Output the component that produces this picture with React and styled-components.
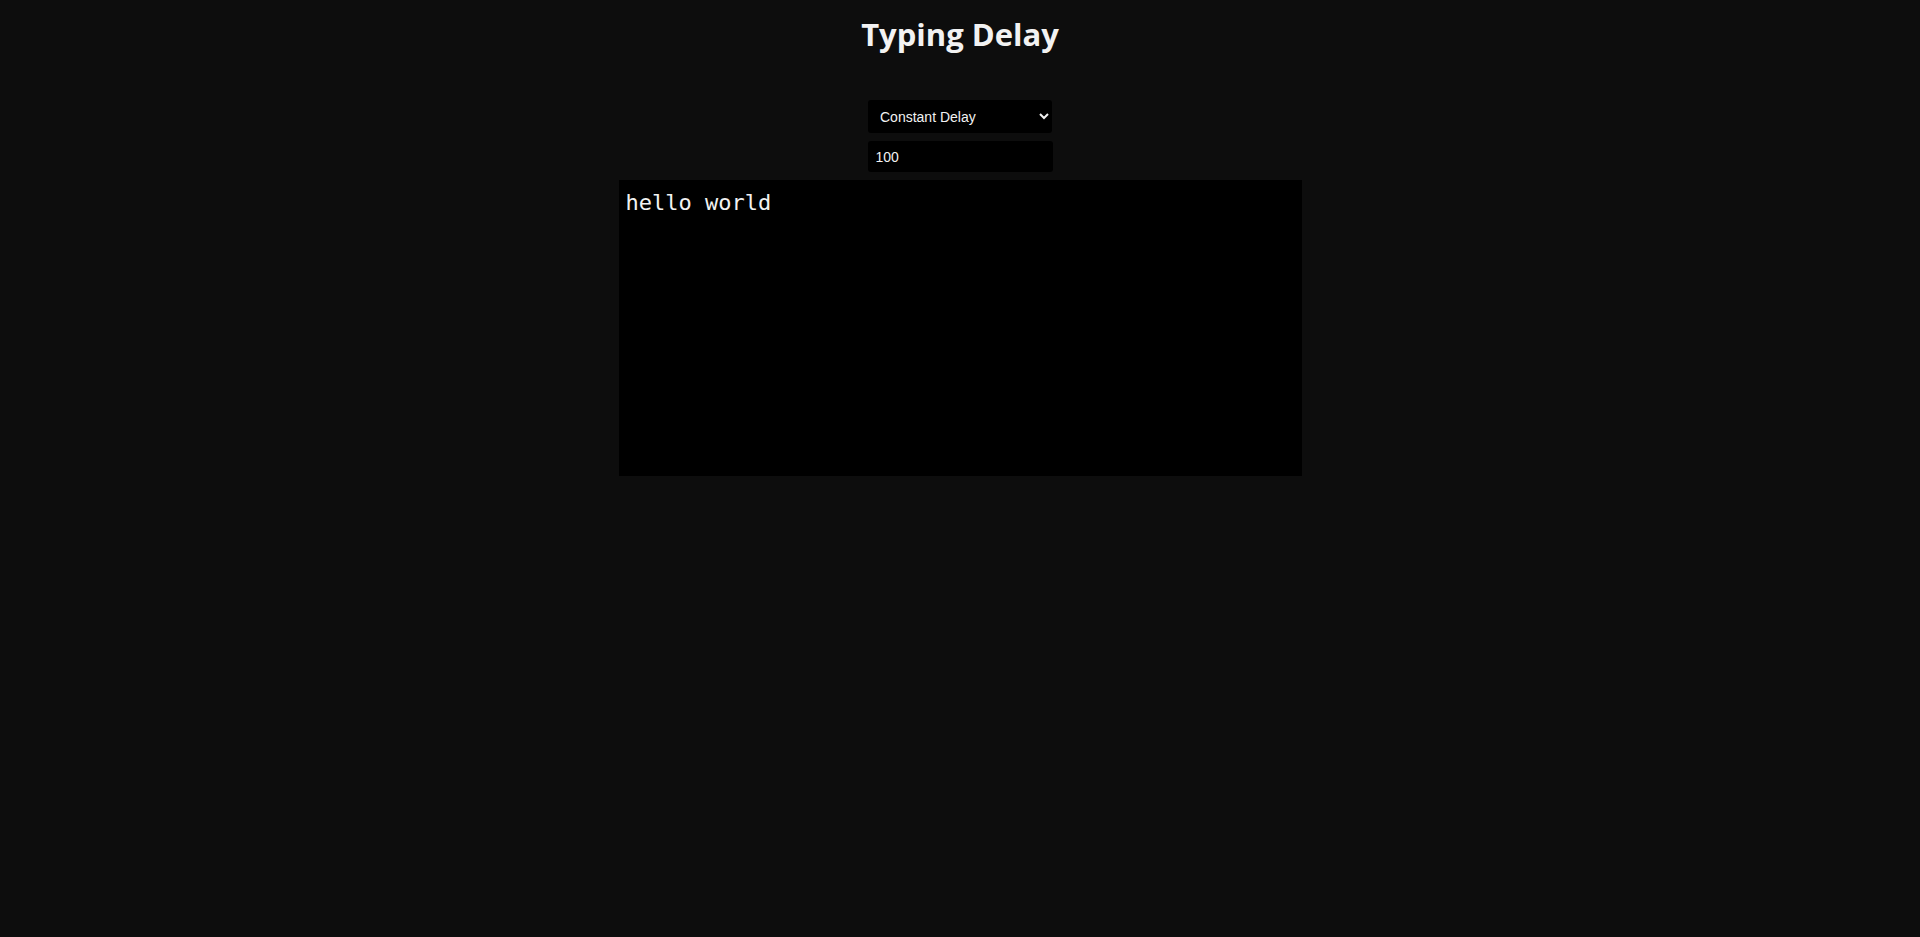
import React from "react";
import styled, { createGlobalStyle } from "styled-components";

const Global = createGlobalStyle`
  html, body { margin: 0; padding: 0; background: #0d0d0d; }
  body { font-family: "Liberation Sans", Arial, sans-serif; color: #f2f2f2; min-height: 937px; }
`;

const Page = styled.main`
  display: flex;
  flex-direction: column;
  align-items: center;
`;

const Title = styled.h1`
  margin: 12px 0 0;
  height: 44px;
  font-family: "Comic Sans MS", "Open Sans", sans-serif;
  font-weight: 700;
  font-size: 31px;
  line-height: 44px;
  color: #f2f2f2;
`;

const Controls = styled.div`
  margin-top: 44px;
  display: flex;
  flex-direction: column;
  align-items: center;
  gap: 8px;
`;

const Select = styled.select`
  width: 184px;
  height: 33px;
  background: #000;
  color: #f2f2f2;
  border: none;
  border-radius: 3px;
  padding: 0 6px 0 8px;
  font-family: "Liberation Sans", Arial, sans-serif;
  font-size: 14px;
  outline: none;
  color-scheme: dark;
`;

const NumberInput = styled.input`
  box-sizing: border-box;
  width: 185px;
  height: 31px;
  background: #000;
  color: #f2f2f2;
  border: none;
  border-radius: 3px;
  padding: 0 8px;
  font-family: "Liberation Sans", Arial, sans-serif;
  font-size: 14px;
  font-weight: 400;
  outline: none;
`;

const Editor = styled.textarea`
  box-sizing: border-box;
  width: 683px;
  height: 296px;
  background: #000;
  color: #f2f2f2;
  border: none;
  padding: 9px 7px 6px;
  font-family: "DejaVu Sans Mono", "Liberation Mono", monospace;
  font-size: 22px;
  line-height: 1.3;
  resize: none;
  outline: none;
`;

export default function App() {
  return (
    <>
      <Global />
      <Page>
        <Title>Typing Delay</Title>
        <Controls>
          <Select defaultValue="constant">
            <option value="constant">Constant Delay</option>
            <option value="random">Random Delay</option>
          </Select>
          <NumberInput type="text" defaultValue="100" />
          <Editor defaultValue="hello world" spellCheck={false} />
        </Controls>
      </Page>
    </>
  );
}
